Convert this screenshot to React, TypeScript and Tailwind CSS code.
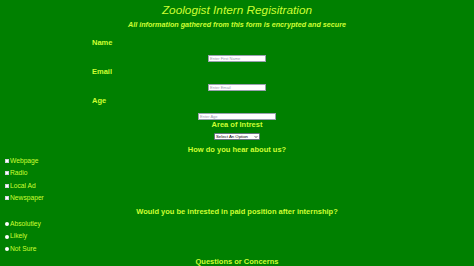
import { ChevronDown } from "lucide-react"

const hear = ["Webpage", "Radio", "Local Ad", "Newspaper"]
const paid = ["Absolutley", "Likely", "Not Sure"]

function Label({ text, className = "" }: { text: string; className?: string }) {
  return <div className={`h-[9px] leading-[9px] text-[7.5px] font-bold ${className}`}>{text}</div>
}

function TextInput({ placeholder, width, className = "" }: { placeholder: string; width: string; className?: string }) {
  return (
    <div className={`mx-auto h-[7px] bg-white border-[0.5px] border-gray-400 flex items-center px-[1px] ${width} ${className}`}>
      <span className="text-[4px] leading-[5px] text-gray-400 whitespace-nowrap">{placeholder}</span>
    </div>
  )
}

export default function App() {
  return (
    <div
      className="w-[474px] h-[266px] overflow-hidden bg-[#008000] text-[#ccff33]"
      style={{ fontFamily: '"Liberation Sans", Arial, sans-serif' }}
    >
      <h1 className="mt-[3px] h-[14px] leading-[14px] text-[11.8px] italic text-center">Zoologist Intern Regisitration</h1>
      <p className="mt-[3px] h-[9px] leading-[9px] text-[7.2px] italic font-bold text-center">
        All information gathered from this form is encrypted and secure
      </p>

      <div className="w-[290px] mx-auto">
        <Label text="Name" className="mt-[8.5px]" />
      </div>
      <TextInput placeholder="Enter First Name" width="w-[58px]" className="mt-[8.5px]" />

      <div className="w-[290px] mx-auto">
        <Label text="Email" className="mt-[4.5px]" />
      </div>
      <TextInput placeholder="Enter Email" width="w-[58px]" className="mt-[8.5px]" />

      <div className="w-[290px] mx-auto">
        <Label text="Age" className="mt-[4.5px]" />
      </div>
      <TextInput placeholder="Enter Age" width="w-[78px]" className="mt-[8.5px]" />

      <Label text="Area of Intrest" className="text-center" />
      <div className="mt-[4px] mx-auto w-[46px] h-[7px] bg-white border-[0.5px] border-gray-500 rounded-[1px] flex items-center justify-between px-[1px] text-black">
        <span className="text-[4.3px] leading-[5px] whitespace-nowrap">Select An Option</span>
        <ChevronDown className="w-[4px] h-[4px]" strokeWidth={4} />
      </div>

      <Label text="How do you hear about us?" className="mt-[4.5px] text-center" />
      <div className="mt-[1px] pl-[5px]">
        {hear.map((h) => (
          <div key={h} className="h-[12.5px] flex items-center gap-[1px]">
            <span className="w-[4px] h-[4px] bg-white border-[0.5px] border-gray-300" />
            <span className="text-[6.7px] leading-[8px]">{h}</span>
          </div>
        ))}
      </div>

      <Label text="Would you be intrested in paid position after internship?" className="mt-[2.75px] text-center" />
      <div className="mt-[1.25px] pl-[5px]">
        {paid.map((p) => (
          <div key={p} className="h-[12.5px] flex items-center gap-[1px]">
            <span className="w-[4px] h-[4px] mt-[1px] rounded-full bg-white" />
            <span className="text-[6.7px] leading-[8px]">{p}</span>
          </div>
        ))}
      </div>

      <Label text="Questions or Concerns" className="mt-[2.25px] text-center" />
    </div>
  )
}
